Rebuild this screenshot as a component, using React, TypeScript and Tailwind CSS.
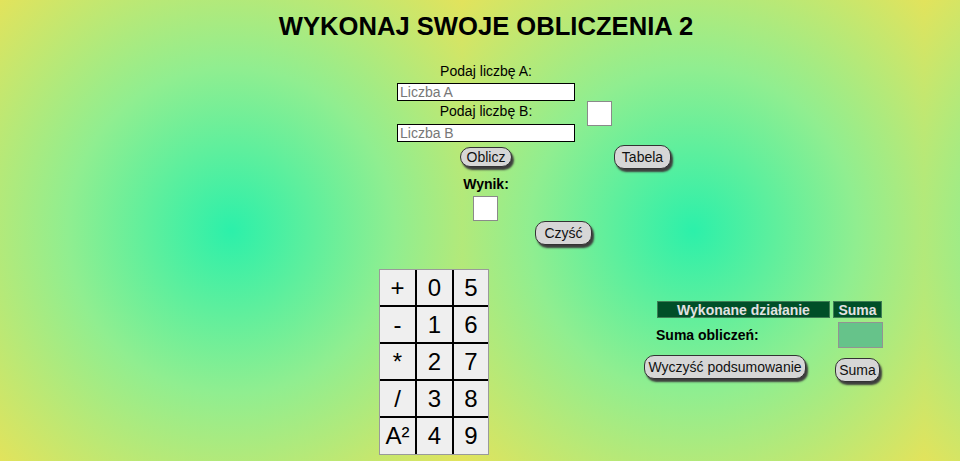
import React from "react";

const btn =
  "bg-[#d6d6d6] border border-[#333] rounded-[10px] shadow-[2px_3px_2px_#3d3d3d] text-[14px] leading-none text-[#111] flex items-center justify-center";

export default function App() {
  const cells = ["+", "0", "5", "-", "1", "6", "*", "2", "7", "/", "3", "8", "A²", "4", "9"];
  return (
    <div
      className="w-[960px] h-[461px] overflow-hidden text-black bg-[radial-gradient(ellipse_at_center,#2cf0aa_0%,#90ee90_50%,#e2e35c_100%)] bg-[length:462px_461px] bg-repeat-x"
      style={{ fontFamily: '"Liberation Sans", Arial, sans-serif' }}
    >
      <h1 className="pt-[12px] pl-[12px] text-center text-[25.6px] leading-[29px] font-bold">
        WYKONAJ SWOJE OBLICZENIA 2
      </h1>

      <div className="ml-[397px] w-[178px] mt-[22px] text-center text-[14px] leading-[16px]">
        Podaj liczbę A:
      </div>
      <input
        placeholder="Liczba A"
        className="block ml-[397px] mt-[4px] w-[178px] h-[18px] bg-white border border-black px-[2px] text-[14px] leading-none placeholder:text-[#777] outline-none"
      />

      <div className="flex items-start">
        <div className="ml-[397px] w-[178px]">
          <div className="mt-[2px] text-center text-[14px] leading-[16px]">Podaj liczbę B:</div>
          <input
            placeholder="Liczba B"
            className="block mt-[5px] w-[178px] h-[18px] bg-white border border-black px-[2px] text-[14px] leading-none placeholder:text-[#777] outline-none"
          />
        </div>
        <div className="ml-[12px] w-[25px] h-[25px] bg-white border border-[#8a8a8a]" />
      </div>

      <div className="flex items-start">
        <button className={`${btn} ml-[460px] mt-[5px] w-[52px] h-[20px]`}>Oblicz</button>
        <button className={`${btn} ml-[102px] mt-[3px] w-[57px] h-[24px]`}>Tabela</button>
      </div>

      <div className="ml-[397px] w-[178px] mt-[7px] text-center text-[14px] leading-[16px] font-bold">
        Wynik:
      </div>
      <div className="ml-[473px] mt-[4px] w-[25px] h-[25px] bg-white border border-[#8a8a8a]" />
      <button className={`${btn} ml-[535px] w-[57px] h-[24px]`}>Czyść</button>

      <div className="flex items-start mt-[24px]">
        <div className="ml-[379px] w-[110px] border border-[#9a9a9a] bg-black grid grid-cols-[35px_35px_34px] grid-rows-[35px_35px_35px_35px_36px] gap-[2px]">
          {cells.map((c, i) => (
            <div
              key={i}
              className="bg-[#efefef] flex items-center justify-center text-[24px] leading-none"
            >
              {c}
            </div>
          ))}
        </div>

        <div className="ml-[155px] w-[240px]">
          <div className="mt-[32px] ml-[13px] flex gap-[3px] text-[14px] font-bold text-[#e2e2e2] leading-none">
            <div className="w-[173px] h-[17px] bg-[#004f28] border border-[#3f7d55] flex items-center justify-center">
              Wykonane działanie
            </div>
            <div className="w-[49px] h-[17px] bg-[#004f28] border border-[#3f7d55] flex items-center justify-center">
              Suma
            </div>
          </div>
          <div className="mt-[4px] flex items-center justify-between w-[239px]">
            <span className="pl-[12px] text-[14px] font-bold">Suma obliczeń:</span>
            <div className="w-[45px] h-[26px] bg-[#66c38a] border border-[#939393]" />
          </div>
          <div className="flex items-start mt-[7px]">
            <button className={`${btn} w-[162px] h-[24px]`}>Wyczyść podsumowanie</button>
            <button className={`${btn} ml-[29px] mt-[3px] w-[45px] h-[24px]`}>Suma</button>
          </div>
        </div>
      </div>
    </div>
  );
}
